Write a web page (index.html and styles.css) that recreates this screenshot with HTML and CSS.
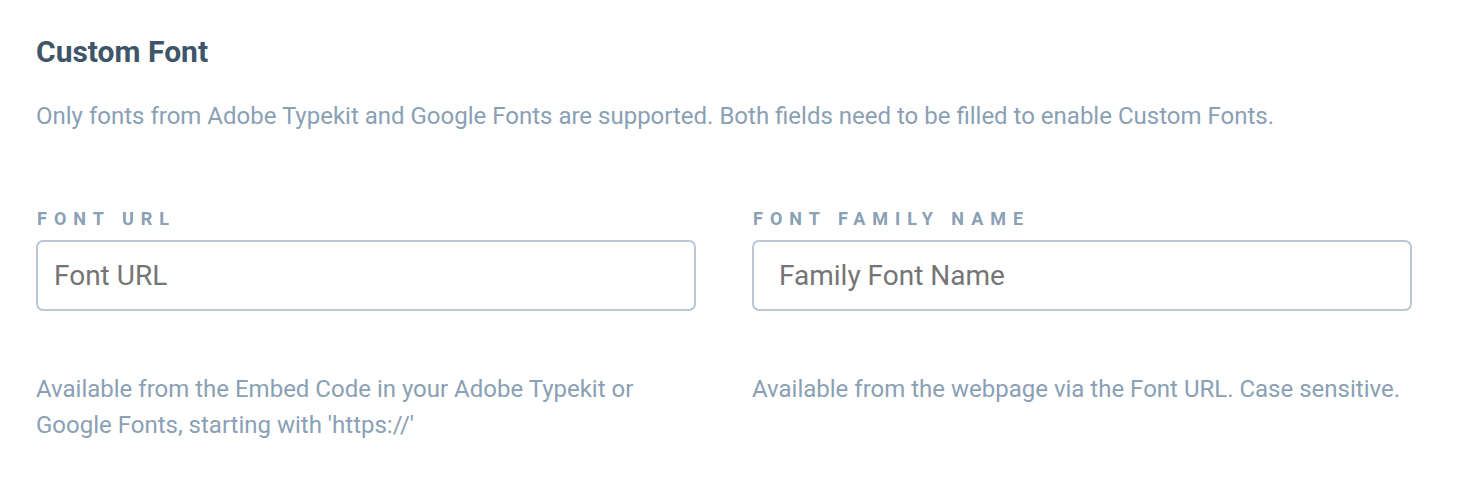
FILE: index.html
```html
<!DOCTYPE html>
<html>
<head>
<meta charset="utf-8">
<link rel="stylesheet" href="styles.css">
</head>
<body>
<section class="panel">
  <h2 class="title">Custom Font</h2>
  <p class="desc">Only fonts from Adobe Typekit and Google Fonts are supported. Both fields need to be filled to enable Custom Fonts.</p>
  <div class="fields">
    <div class="field">
      <label class="label">Font URL</label>
      <input class="input" type="text" placeholder="Font URL">
      <p class="help">Available from the Embed Code in your Adobe Typekit or Google Fonts, starting with 'https://'</p>
    </div>
    <div class="field">
      <label class="label">Font Family Name</label>
      <input class="input input-wide" type="text" placeholder="Family Font Name">
      <p class="help">Available from the webpage via the Font URL. Case sensitive.</p>
    </div>
  </div>
</section>
</body>
</html>
```
FILE: styles.css
```css
* { box-sizing: border-box; }
html, body { margin: 0; padding: 0; background: #fff; }
body { font-family: Roboto, "Noto Sans", sans-serif; }
.panel { padding: 34px 47px 0 36px; }
.title {
  margin: 0;
  font-size: 30px;
  font-weight: 700;
  color: #3f5569;
  line-height: 36px;
}
.desc {
  margin: 32px 0 0;
  font-size: 24px;
  line-height: 28px;
  color: #8aa0b4;
}
.fields {
  display: grid;
  grid-template-columns: 660px 660px;
  column-gap: 56px;
  margin-top: 78px;
}
.field { display: flex; flex-direction: column; }
.label {
  font-size: 18px;
  font-weight: 700;
  letter-spacing: 7px;
  text-transform: uppercase;
  color: #8aa0b4;
  line-height: 22px;
  padding-left: 1px;
}
.input {
  margin-top: 10px;
  height: 71px;
  width: 100%;
  border: 2px solid #b9c7d6;
  border-radius: 7px;
  padding: 0 16px;
  font-family: Roboto, sans-serif;
  font-size: 28px;
  color: #333;
  outline: none;
}
.input-wide { padding-left: 25px; }
.input::placeholder { color: #757575; }
.help {
  margin: 60px 0 0;
  font-size: 24px;
  line-height: 36px;
  color: #8aa0b4;
}
```
